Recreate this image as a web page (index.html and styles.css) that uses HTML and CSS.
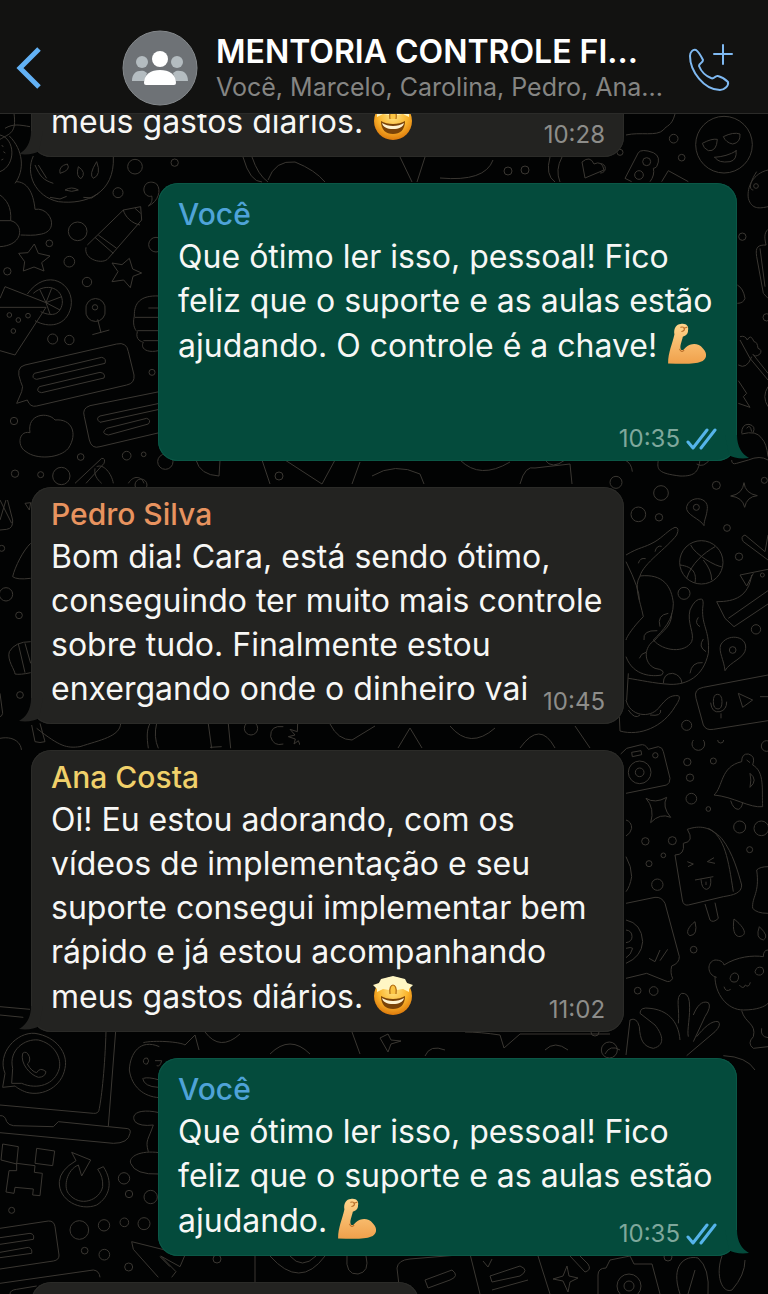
FILE: index.html
```
<!DOCTYPE html>
<html lang="pt-BR">
<head>
  <meta charset="UTF-8">
  <meta name="viewport" content="width=device-width, initial-scale=1.0">
  <title>Mentoria Controle Financeiro</title>
  <link rel="stylesheet" href="styles.css">
</head>
<body>
  <!-- Ícones reutilizados -->
  <svg class="sprite" aria-hidden="true">
    <defs>
      <linearGradient id="skin" x1="0" y1="0" x2="0" y2="1">
        <stop offset="0" stop-color="#ffd58c"/>
        <stop offset="1" stop-color="#f0a04b"/>
      </linearGradient>
      <radialGradient id="face" cx="50%" cy="35%" r="65%">
        <stop offset="0" stop-color="#ffe486"/>
        <stop offset=".6" stop-color="#fbb52c"/>
        <stop offset="1" stop-color="#dd7a0c"/>
      </radialGradient>
    </defs>
    <symbol id="arm" viewBox="0 0 40 40">
      <path d="M2 38.500 C2 28 6 20 8 11 C7 5 10 1 14 1 C19 0 22 3 21 7 C21 11 19 12 16 13 C15 18 13 21 14 25 C16 27 17 25 19 23 C24 19 31 19 35 24 C40 29 39 35 33 37 C28 39.500 14 39 2 38.500Z" fill="url(#skin)"/>
      <path d="M14 4 C18 3 19 7 15 8 M20 4 L17 5 M13 25 C14 27 15 28 17 26" fill="none" stroke="#b96f2a" stroke-width="1" stroke-linecap="round"/>
    </symbol>
    <symbol id="star-face" viewBox="0 0 42 42">
      <circle cx="21" cy="22" r="19" fill="url(#face)"/>
      <path d="M9 5 L21 2 L33 5 L35 9 L41 11 L37 15 L37 18 L31 15 L25 16 L21 11 L17 16 L11 15 L5 18 L5 15 L1 11 L7 9Z" fill="#fff6c4"/>
      <path d="M18 20 C17 14 19 11 21 11 C23 11 25 14 24 20" fill="#fbc443" stroke="#b06b13" stroke-width="1.200"/>
      <path d="M9 22 C15 26 27 26 33 22 C33 31 28 35 21 35 C14 35 9 31 9 22Z" fill="#7a4308"/>
      <path d="M10 24 C16 28 26 28 32 24 C31 28 27 30 21 30 C15 30 11 28 10 24Z" fill="#fff3cf"/>
    </symbol>
    <symbol id="checks" viewBox="0 0 32 22">
      <path d="M2 14 L7 20 L21 2 M15 20 L29 2" fill="none" stroke="#55b4ea" stroke-width="3" stroke-linecap="round" stroke-linejoin="round"/>
    </symbol>
  </svg>

  <div class="chat">
    <!-- Papel de parede -->
    <svg class="wallpaper" viewBox="0 0 768 1294" preserveAspectRatio="xMidYMin slice" aria-hidden="true">
      <!-- esquerda, topo -->
      <svg x="0" y="110" width="180" height="380" viewBox="0 0 540 1140">
        <path d="M0 88 C30 70 50 70 42 10 M15 55 C40 40 60 45 90 50 M0 75 C45 85 50 165 0 185 M28 78 C70 120 75 180 45 220 M5 105 l5 6 M10 125 l6 4 M4 150 l6 -3"/>
        <path d="M100 138 C75 190 105 260 175 275 C260 285 345 250 340 140 M105 165 C120 200 130 210 160 220 M115 165 L140 205 M180 190 q-5 -22 22 -28 q12 18 -22 28 M235 170 q-8 30 8 36 q18 -18 -8 -36 M290 155 q-25 40 -10 50 q25 -10 10 -50 M195 240 q20 -12 40 0 q-20 8 -40 0 M150 262 l30 5 l20 -8 M250 262 l25 2 l20 -14"/>
        <path d="M48 215 C80 215 100 245 105 298 C150 290 180 360 125 372 C100 378 80 375 62 375 M0 255 C20 270 35 290 32 332 C70 340 75 405 0 410 M0 332 h32"/>
        <path d="M262 405 L370 300 L422 290 L425 330 L325 445 C310 465 250 450 258 412 M285 382 L340 430 M295 375 L350 415 M370 300 C375 320 395 340 420 345 M405 295 L422 310"/>
        <path d="M103 402 l12 28 l35 8 l-25 20 l7 25 l-30 -12 l-32 12 l4 -28 l-18 -25 l28 -2z M388 445 l10 32 l27 12 l-26 10 l-8 34 l-20 -23 l-35 5 l18 -30 l-18 -26 l30 5z"/>
        <path d="M0 592 H138 L45 735 L0 722 M0 565 L15 530 L138 578 M82 552 C140 470 225 520 213 590 C200 650 145 655 105 632 M100 550 C140 515 190 535 187 580 C180 620 150 618 122 605 M138 578 L120 540 M138 578 L155 535 M138 578 L185 560 M138 578 L180 600 M138 578 L150 612"/>
        <path d="M258 600 a29 29 0 1 1 57 0 a29 29 0 1 1 -57 0 M293 628 L303 668 M277 674 L328 660"/>
        <path d="M478 558 C420 555 402 580 403 618 C395 650 410 665 412 665 C405 690 425 695 430 697 C420 715 440 730 475 722 M405 622 H478 M412 662 H478 M430 692 H478 M445 594 h33"/>
        <path d="M75 765 L350 702 Q380 695 385 725 L402 795 Q405 820 380 825 L110 888 Q90 893 82 870 L50 880 L65 845 Q72 830 62 815 Q45 772 75 765Z M103 790 L305 742 Q320 745 315 760 L110 808 Q92 805 103 790Z M118 830 L300 787 Q318 790 312 804 L125 848 Q105 845 118 830Z"/>
        <path d="M478 845 L270 887 Q245 895 253 920 L268 990 Q275 1018 300 1010 L478 968 M478 880 L300 918 Q285 925 300 937 L478 898 M320 955 L440 925 Q455 930 445 942 L325 975 Q300 970 320 955Z"/>
        <path d="M90 968 C55 960 50 1010 78 1025 C110 1050 180 1045 205 1015 C235 970 215 925 165 930 C145 905 80 910 90 968Z"/>
        <path d="M225 1120 L305 1045 Q318 1045 312 1060 L258 1120 M290 1070 C310 1060 335 1090 340 1120 M285 1075 C280 1100 300 1115 305 1120 M385 1120 C400 1095 425 1098 432 1120"/>
        <path d="M440 220 C420 240 440 265 455 258 C458 270 455 280 445 288 C475 275 485 240 470 222 C460 215 450 215 440 220Z"/>
        <circle cx="405" cy="170" r="22"/><circle cx="524" cy="158" r="11"/><circle cx="354" cy="248" r="15"/><circle cx="233" cy="364" r="28"/><circle cx="148" cy="400" r="10"/><circle cx="208" cy="455" r="16"/><circle cx="22" cy="484" r="11"/><circle cx="261" cy="516" r="14"/><circle cx="285" cy="592" r="8"/><circle cx="28" cy="615" r="7"/><circle cx="55" cy="630" r="7"/><circle cx="84" cy="617" r="7"/><circle cx="40" cy="663" r="7"/><circle cx="158" cy="687" r="15"/><circle cx="208" cy="690" r="14"/><circle cx="456" cy="787" r="9"/><circle cx="42" cy="933" r="11"/><circle cx="242" cy="1041" r="10"/><circle cx="380" cy="1037" r="13"/><circle cx="431" cy="1033" r="7"/><circle cx="45" cy="1091" r="11"/><circle cx="122" cy="1094" r="9"/><circle cx="184" cy="1098" r="26"/><circle cx="496" cy="1055" r="23"/><circle cx="468" cy="404" r="22"/>
      </svg>
      <!-- direita, topo -->
      <svg x="600" y="110" width="168" height="370" viewBox="0 0 504 1110">
        <circle cx="372" cy="104" r="85"/>
        <path d="M307 100 Q335 85 352 88 Q350 125 325 122 Q310 115 307 100Z M370 80 Q400 65 420 72 Q422 98 398 102 Q378 98 370 80Z M342 142 Q380 140 410 122 M345 142 Q355 160 390 155 Q412 150 408 120"/>
        <path d="M78 75 C120 65 170 80 190 60 C200 45 215 50 225 12 M75 205 L115 128 Q125 115 160 128 Q185 140 170 170 Q165 175 160 175 Q165 195 150 215 M75 205 L95 215 M185 215 L205 182 L265 215"/>
        <path d="M504 180 C460 190 440 230 445 265 C455 300 480 295 504 290 M470 185 C450 215 445 240 460 240 M504 358 C490 370 495 390 498 405 C475 405 465 410 470 440 L490 550 L504 565 M480 415 L495 530 M412 525 Q430 535 435 565 Q430 580 412 580"/>
        <path d="M420 680 q15 -5 22 10 q10 -20 20 5 q10 0 12 20 q15 5 5 18 q-15 10 -20 0 L504 790 M420 690 L450 745 L504 810 M415 765 Q440 780 455 740 M415 812 L440 850 L430 860 L450 892 L415 880 M504 830 Q485 860 504 890"/>
        <path d="M425 970 q0 -28 22 -27 q22 5 12 25 M440 955 q10 -15 15 10 M425 972 Q470 960 485 985 Q500 1000 504 1040 M395 1050 Q395 1065 410 1060 L445 1050 Q480 1035 504 1050 M75 1050 Q95 1060 97 1085 M175 1050 C170 1080 175 1090 240 1098 C290 1100 295 1080 300 1050 M290 1062 Q310 1075 330 1048"/>
        <circle cx="221" cy="86" r="13"/><circle cx="245" cy="143" r="10"/><circle cx="60" cy="127" r="9"/><circle cx="140" cy="155" r="12"/><circle cx="117" cy="195" r="13"/><circle cx="2" cy="175" r="14"/><circle cx="427" cy="380" r="11"/><circle cx="468" cy="228" r="7"/><circle cx="500" cy="622" r="11"/>
      </svg>
      <!-- direita, meio -->
      <svg x="600" y="400" width="168" height="340" viewBox="0 0 504 1020">
        <path d="M432 248 Q435 280 472 287 Q440 290 434 322 Q428 292 392 288 Q428 282 432 248Z M312 377 C300 355 255 345 260 320 C270 285 325 290 322 325 C320 350 312 360 312 377Z M375 812 C372 780 355 755 362 735 C380 700 440 705 437 745 C435 775 390 785 375 812Z"/>
        <circle cx="304" cy="487" r="65"/>
        <path d="M272 435 C285 465 350 500 365 500 M345 440 C310 460 275 490 260 535 M240 495 C280 500 290 520 285 548 M310 480 Q335 510 335 540"/>
        <path d="M78 465 C120 440 130 445 165 425 C190 410 205 390 225 382 Q240 382 230 405 C200 445 130 490 120 528 C190 520 215 560 220 610 C220 660 190 690 160 720 C190 755 255 760 275 725 C285 700 260 670 270 630 Q285 595 305 597 Q312 600 308 625 C305 680 330 690 325 760 C310 830 260 855 210 853 C160 850 120 840 85 835 M120 528 C100 560 120 600 130 650 C100 680 80 710 78 720 M78 485 Q120 570 118 600 M78 770 C100 830 160 830 185 825 Q200 810 165 805 C130 790 130 740 165 720 C190 690 215 680 215 640"/>
        <path d="M180 680 q-10 -35 25 -40 M132 720 q-5 -30 40 -28 M118 775 q5 -15 20 -18 M190 850 q0 -30 28 -30 q25 5 28 30 M270 820 q5 -35 38 -32 M300 680 q-18 -10 -5 -28 M318 755 q-25 -15 -8 -38 M115 490 q5 -18 22 -14 M165 455 q5 -20 20 -16"/>
        <path d="M78 900 C90 950 150 955 175 925 C200 895 210 885 235 887 Q245 892 225 920 C190 980 120 1010 60 993 L58 950 M85 820 L80 900 M85 930 q20 30 35 15 M150 945 q35 5 32 -15"/>
        <path d="M504 405 L495 455 L435 405 Q420 410 430 425 L504 480 M504 508 L420 525 L440 558 L460 520 M455 525 C445 590 405 605 350 605 L375 655 L402 680 L504 612 M385 655 L504 572"/>
        <path d="M504 825 L310 862 Q280 867 288 895 L310 975 Q318 992 340 988 L504 962 M340 905 q0 -22 12 -22 q14 0 14 22 q0 22 -12 22 q-14 0 -14 -22 M332 908 Q335 940 360 935 Q380 930 380 905 M363 940 v15 M415 880 L458 900 L428 922Z M480 890 h24"/>
        <circle cx="48" cy="247" r="18"/><circle cx="183" cy="279" r="22"/><circle cx="115" cy="343" r="22"/><circle cx="177" cy="352" r="11"/><circle cx="289" cy="322" r="9"/><circle cx="349" cy="256" r="12"/><circle cx="493" cy="241" r="9"/><circle cx="381" cy="384" r="10"/><circle cx="417" cy="470" r="11"/><circle cx="252" cy="580" r="18"/><circle cx="468" cy="688" r="14"/><circle cx="398" cy="750" r="10"/><circle cx="487" cy="525" r="6"/><circle cx="260" cy="976" r="15"/>
      </svg>
      <!-- direita, baixo -->
      <svg x="600" y="740" width="168" height="330" viewBox="0 120 504 990">
        <path d="M62 162 L80 145 L120 135 Q135 130 145 148 L175 140 Q188 142 190 155 L210 235 Q210 250 200 255 L78 280 M95 157 l28 -5 l2 12 l-28 6z"/>
        <circle cx="119" cy="217" r="34"/><circle cx="119" cy="217" r="13"/><circle cx="166" cy="166" r="8"/>
        <path d="M138 295 Q165 312 200 292 Q185 320 212 352 Q180 338 152 368 Q165 325 138 295Z"/>
        <path d="M425 185 Q425 160 445 162 Q468 168 458 195 C495 215 485 270 488 320 C450 325 400 290 342 285 C370 260 360 200 425 185Z M450 220 Q475 240 450 262 Q455 240 450 220Z M392 302 Q400 328 415 328 Q425 325 428 308 M440 180 l10 8"/>
        <path d="M262 388 C300 375 330 380 365 415 C400 460 415 520 425 555 C425 580 400 585 370 590 L265 615 Q250 618 247 600 L225 465 Q255 465 250 430 Q285 425 262 388Z M325 385 C375 410 385 480 400 575 M262 485 L280 492 L264 500 M342 473 L322 485 L345 490 M285 540 L340 530 M303 538 Q305 568 320 568 Q335 565 332 535 M318 545 v10 M315 612 L330 660 Q340 670 355 655 L345 608"/>
        <path d="M285 665 C265 680 255 700 270 707 Q295 705 285 665Z M402 657 C395 700 410 715 425 708 C445 700 425 675 402 657Z M478 680 Q465 715 490 720 Q510 710 478 680Z"/>
        <path d="M78 610 L165 592 Q185 590 195 610 L238 770 Q238 790 215 798 Q210 820 218 835 Q210 850 195 842 L140 820 L78 835 M78 660 Q125 670 128 725 Q125 770 78 790 M78 690 q18 2 18 20 q0 15 -18 18 M78 745 q15 -5 20 0 q-5 20 -20 28 M147 775 L165 785 L180 750 M180 782 L203 748 M78 360 Q95 365 95 385 Q92 400 78 408 M78 470 Q95 500 95 530 Q90 560 78 575"/>
        <path d="M350 832 C320 825 320 785 345 780 C360 780 370 785 372 795 C410 770 460 765 490 770 Q490 750 504 750 M345 830 C345 880 380 930 430 930 C470 930 495 920 504 910 M390 835 q5 -20 20 -15 q12 10 0 25 q-18 5 -20 -10 M465 815 q5 -18 22 -12 q10 15 -5 22 q-15 2 -17 -10 M418 855 q12 15 18 0 q10 10 15 -8 M372 860 q5 18 20 8 M425 932 C435 970 470 970 460 1010 Q440 1030 460 1045 L504 1040 M485 985 q-5 25 19 28 M470 510 Q480 500 504 500 M470 510 C480 580 455 590 458 625 Q470 640 504 640"/>
        <path d="M78 1065 L90 960 Q110 950 118 980 C120 1020 130 1040 160 1045 C200 1035 185 1000 165 975 L120 940 Q120 920 150 925 C200 930 235 960 240 1020 M235 970 C240 930 225 890 245 880 Q265 878 268 905 C272 950 260 990 265 1010 M280 945 C290 920 305 900 325 908 Q335 920 315 950 L280 1025 M290 1010 C310 985 335 960 355 965 Q365 975 345 995 L260 1067 M370 1067 Q440 1070 465 1110"/>
        <circle cx="295" cy="132" r="19"/><circle cx="362" cy="120" r="9"/><circle cx="262" cy="186" r="11"/><circle cx="340" cy="183" r="9"/><circle cx="270" cy="233" r="11"/><circle cx="274" cy="296" r="16"/><circle cx="325" cy="327" r="7"/><circle cx="419" cy="381" r="18"/><circle cx="484" cy="385" r="22"/><circle cx="449" cy="449" r="9"/><circle cx="136" cy="424" r="11"/><circle cx="217" cy="422" r="12"/><circle cx="190" cy="466" r="7"/><circle cx="147" cy="491" r="9"/><circle cx="172" cy="554" r="17"/><circle cx="281" cy="749" r="10"/><circle cx="113" cy="872" r="10"/><circle cx="161" cy="873" r="13"/><circle cx="28" cy="1050" r="24"/><circle cx="500" cy="138" r="16"/>
      </svg>
      <!-- esquerda, meio -->
      <svg x="0" y="500" width="300" height="250" viewBox="0 90 900 750">
        <path d="M0 58 Q15 65 20 80 L38 150 Q40 175 20 178 L0 180 M0 150 L18 90 M0 90 L35 160 M92 220 C70 240 45 290 38 320 Q50 330 92 325 M92 515 Q45 515 28 545 C20 570 45 600 45 612 Q60 615 92 608 M55 522 L75 608 M75 520 L92 580 M0 670 L8 730 Q5 740 0 740 M0 805 C50 795 75 830 60 860 M75 100 L92 98 L88 120Z"/>
        <path d="M95 765 L105 815 Q120 820 135 815 L120 760 M110 775 C180 830 200 835 240 830 C300 810 360 800 362 760 M445 835 C440 800 440 780 450 760 M470 760 Q460 800 475 835 M625 762 L635 835 M685 762 L692 835 M630 832 L665 830 M850 770 Q810 765 812 800 Q820 830 850 822"/>
        <path d="M893 760 L892 785 L870 778 L885 795 L865 800 L886 807 L882 822 L895 812 L900 825"/>
        <circle cx="18" cy="373" r="20"/><circle cx="57" cy="436" r="10"/><circle cx="5" cy="235" r="9"/><circle cx="60" cy="675" r="10"/><circle cx="753" cy="775" r="20"/>
      </svg>
      <!-- esquerda, baixo -->
      <svg x="0" y="1000" width="200" height="294" viewBox="0 0 600 882">
        <path d="M0 20 L90 28 M0 45 L70 52 M318 93 C315 200 305 290 298 325 Q297 342 280 340 L0 315 M347 93 L325 378 M0 347 Q15 345 20 365 Q25 375 40 377 L160 380 L175 365 L375 385 Q395 385 390 400 Q385 430 340 430 L0 398"/>
        <path d="M8 262 L15 220 C-10 160 50 95 105 100 C170 110 205 160 195 205 C185 260 130 290 80 277 C60 270 50 262 45 258Z M35 250 L38 205 C25 150 75 115 115 120 C160 130 185 170 178 205 C165 255 110 270 65 250Z M68 160 Q80 150 88 170 Q92 185 82 192 Q95 215 110 218 Q120 200 138 215 Q135 232 115 232 C90 225 60 190 68 160Z"/>
        <path d="M8 432 L55 440 L50 492 L3 480Z M110 445 L164 453 L158 497 L105 490Z M50 490 L105 497 L103 517 L127 520 L120 587 L98 585 L100 567 L45 562 L42 580 L18 576 L27 512 L50 512Z M215 457 L272 480 L245 528 L235 495 C200 510 190 560 205 580 C240 625 300 600 308 560 Q310 530 293 508 L310 500 C340 545 330 590 290 615 C240 635 175 600 178 545 Q180 510 228 482Z"/>
        <path d="M478 140 C420 115 390 160 388 210 C395 260 430 290 478 293 M430 128 C460 120 540 125 555 135 L585 105 L597 150 M430 235 Q445 230 478 240 M428 235 Q432 260 475 262 M430 182 q2 -10 12 -8 q8 8 0 18 q-12 2 -12 -10 M465 182 h20 q-5 20 -15 15 M478 338 C420 325 390 340 405 365 Q420 380 460 375 C445 420 435 420 445 455 M478 458 C420 450 385 470 392 490 Q405 525 478 522"/>
        <path d="M0 685 L145 663 Q162 662 165 680 L177 765 Q178 780 160 783 L0 807 M0 713 L90 700 Q105 702 100 718 L0 733 M0 757 L85 742 Q98 745 95 760 L0 773 M0 850 L280 810 Q298 812 300 832 M30 882 Q30 870 50 868 L110 858 M395 725 L555 765 L540 800 L482 768 L528 815 L515 832 M395 725 L400 748 L475 832 M480 770 L510 800"/>
        <circle cx="372" cy="535" r="17"/><circle cx="387" cy="582" r="11"/><circle cx="452" cy="591" r="20"/><circle cx="35" cy="631" r="9"/><circle cx="238" cy="690" r="28"/><circle cx="312" cy="676" r="17"/><circle cx="373" cy="667" r="13"/><circle cx="432" cy="671" r="18"/><circle cx="254" cy="752" r="10"/><circle cx="313" cy="764" r="16"/><circle cx="386" cy="801" r="12"/>
      </svg>
      <!-- faixas entre as mensagens -->
      <path d="M243 157 Q250 182 262 182 M252 157 Q258 175 268 182 M268 180 Q275 160 295 162 Q315 170 325 182 M400 157 L412 182 M425 157 L417 182 M440 178 Q485 182 493 160 M550 157 Q545 175 555 182 M562 157 Q555 170 560 182 M582 162 Q590 155 594 164 Q602 160 604 170 L585 178Z"/>
      <path d="M196 460 Q200 475 219 476 L220 460 M262 460 L270 484 M285 460 L322 484 L335 460 M360 462 L352 484 M372 476 Q395 462 420 474 L424 484 M460 460 Q480 480 510 462 M520 484 Q525 465 535 468 L570 464 L572 484 M545 460 Q552 470 565 460"/>
      <path d="M330 724 Q338 740 352 740 L375 726 M398 748 L410 728 L422 748 M450 726 Q470 750 495 728 M520 748 Q540 720 555 748 M575 726 L590 748"/>
      <path d="M352 1032 L360 1054 M380 1038 L388 1034 L391 1040 L401 1041 L391 1044 L388 1052Z M425 1056 Q430 1044 445 1050 M465 1032 Q480 1032 500 1035 L504 1048 L520 1034 L610 1034 M545 1050 Q555 1040 568 1050 M605 1054 Q610 1044 620 1050 M205 1032 Q220 1052 240 1034 M270 1054 Q290 1034 310 1054"/>
      <path d="M255 1256 V1294 M270 1256 Q300 1290 325 1256 M290 1256 Q302 1270 316 1256 M347 1256 Q345 1275 358 1274 Q370 1272 366 1256 M400 1294 L397 1268 Q398 1260 410 1259 L470 1254 L480 1294 M425 1280 L452 1270 Q460 1276 450 1280 L428 1288Z M483 1261 L488 1267 L492 1259 M490 1276 L520 1266 Q530 1270 520 1276 L492 1282Z M492 1290 L528 1280 M538 1256 L550 1294 M567 1266 L569 1276 L578 1278 L570 1282 L568 1292 L563 1281 L553 1279 L563 1276Z M570 1256 L585 1272 Q592 1270 588 1264 L580 1256 M598 1294 V1275 Q598 1268 606 1268 L610 1260 L630 1256 L634 1264 L652 1264 L660 1294 M680 1294 C670 1265 685 1255 698 1258 Q710 1268 708 1294 M688 1294 L695 1270 M722 1256 C715 1275 722 1294 732 1290 Q745 1275 745 1260"/>
      <circle cx="629" cy="1286" r="12"/><circle cx="629" cy="1286" r="5"/><circle cx="217" cy="1259" r="4"/><circle cx="668" cy="1257" r="4"/><circle cx="141" cy="485" r="6"/><circle cx="279" cy="476" r="4"/><circle cx="508" cy="171" r="4"/><circle cx="525" cy="170" r="4"/><circle cx="595" cy="1032" r="4"/>
    </svg>

    <header class="chat-header">
      <button class="icon-btn back-btn" aria-label="Voltar">
        <svg width="30" height="46" viewBox="0 0 30 46"><path d="M25 4 L6 23 L25 42" fill="none" stroke="#62b1f5" stroke-width="5"/></svg>
      </button>
      <svg class="avatar" viewBox="0 0 76 76" role="img" aria-label="Foto do grupo">
        <circle cx="38" cy="38" r="37" fill="#6e7276" stroke="#85898c"/>
        <g fill="#b4bcc0">
          <circle cx="20" cy="32" r="6"/>
          <circle cx="55" cy="32" r="6"/>
          <path d="M10 51 C10 43 15 40 22 41 L25 43 L22 51Z M66 51 C66 43 61 40 54 41 L51 43 L54 51Z"/>
        </g>
        <circle cx="38" cy="29" r="8" fill="#fff"/>
        <path d="M22 53 C22 44 29 40 38 40 C47 40 54 44 54 53 Q54 55 52 55 H24 Q22 55 22 53Z" fill="#fff"/>
      </svg>
      <div class="group-info">
        <h1 class="group-name">MENTORIA CONTROLE FI...</h1>
        <p class="group-members">Você, Marcelo, Carolina, Pedro, Ana...</p>
      </div>
      <button class="icon-btn call-btn" aria-label="Ligar">
        <svg width="48" height="50" viewBox="0 0 48 50" fill="none" stroke="#7fb9f2" stroke-width="2" stroke-linejoin="round" stroke-linecap="round">
          <path d="M4 13 C4 9 7 6 10 7 C13 9 15 13 17 17 C17 20 13 20 13 23 C15 28 20 33 25 35 C28 37 29 32 32 33 C36 34 39 36 42 39 C43 43 38 47 34 47 C18 47 4 28 4 13Z"/>
          <path d="M37 2 V21 M28 11 H46"/>
        </svg>
      </button>
    </header>

    <main class="messages">
      <article class="bubble incoming scrolled">
        <p class="text">meus gastos diários. <svg class="emoji" role="img" aria-label="🤩"><use href="#star-face"/></svg></p>
        <span class="meta"><time>10:28</time></span>
      </article>

      <article class="bubble outgoing spaced">
        <h2 class="author me">Você</h2>
        <p class="text">Que ótimo ler isso, pessoal! Fico feliz que o suporte e as aulas estão ajudando. O controle é a chave! <svg class="emoji" role="img" aria-label="💪"><use href="#arm"/></svg></p>
        <span class="meta"><time>10:35</time><svg class="checks" role="img" aria-label="Lida"><use href="#checks"/></svg></span>
      </article>

      <article class="bubble incoming">
        <h2 class="author pedro">Pedro Silva</h2>
        <p class="text">Bom dia! Cara, está sendo ótimo, conseguindo ter muito mais controle sobre tudo. Finalmente estou enxergando onde o dinheiro vai</p>
        <span class="meta"><time>10:45</time></span>
      </article>

      <article class="bubble incoming">
        <h2 class="author ana">Ana Costa</h2>
        <p class="text">Oi! Eu estou adorando, com os vídeos de implementação e seu suporte consegui implementar bem rápido e já estou acompanhando meus gastos diários. <svg class="emoji" role="img" aria-label="🤩"><use href="#star-face"/></svg></p>
        <span class="meta"><time>11:02</time></span>
      </article>

      <article class="bubble outgoing">
        <h2 class="author me">Você</h2>
        <p class="text">Que ótimo ler isso, pessoal! Fico feliz que o suporte e as aulas estão ajudando. <svg class="emoji" role="img" aria-label="💪"><use href="#arm"/></svg></p>
        <span class="meta"><time>10:35</time><svg class="checks" role="img" aria-label="Lida"><use href="#checks"/></svg></span>
      </article>

      <article class="bubble incoming next"></article>
    </main>
  </div>
</body>
</html>
```
FILE: styles.css
```
* {
  box-sizing: border-box;
}
body {
  margin: 0;
  background: #020303;
  color: #f7f7f5;
  font-family: Inter, 'Liberation Sans', sans-serif;
}
h1, h2, p {
  margin: 0;
}
.sprite {
  position: absolute;
  width: 0;
  height: 0;
}
.chat {
  position: relative;
  display: flex;
  flex-direction: column;
  height: 100vh;
  overflow: hidden;
}
.wallpaper {
  position: absolute;
  inset: 0;
  width: 100%;
  height: 100%;
  fill: none;
  stroke: #3a3732;
  stroke-width: 1;
}
.wallpaper svg {
  stroke-width: 3;
}

/* Cabeçalho */
.chat-header {
  position: relative;
  z-index: 1;
  display: flex;
  align-items: center;
  flex-shrink: 0;
  height: 114px;
  padding: 22px 34px 0 14px;
  background: #121211;
  border-bottom: 1px solid #2b2b29;
}
.icon-btn {
  display: flex;
  padding: 0;
  background: none;
  border: none;
  cursor: pointer;
}
.back-btn {
  margin-right: 78px;
}
.avatar {
  flex-shrink: 0;
  width: 76px;
  height: 76px;
  margin-right: 18px;
}
.group-info {
  flex: 1;
  min-width: 0;
  padding-top: 2px;
  white-space: nowrap;
}
.group-name {
  font-size: 32px;
  font-weight: 600;
  line-height: 36px;
  color: #fff;
}
.group-members {
  font-size: 25px;
  line-height: 34px;
  color: #858583;
}

/* Mensagens */
.messages {
  position: relative;
  flex: 1;
  display: flex;
  flex-direction: column;
  gap: 26px;
  min-height: 0;
  padding: 0 31px;
  overflow: hidden;
}
.bubble {
  position: relative;
  flex-shrink: 0;
  padding: 6px 10px 13px 20px;
  border-radius: 20px;
}
.incoming {
  align-self: flex-start;
  width: 84%;
  background: #232321;
  box-shadow: inset 0 0 0 1px #2b2b28;
}
.outgoing {
  align-self: flex-end;
  width: 82%;
  padding-top: 10px;
  background: #044b3c;
  box-shadow: inset 0 0 0 1px #0b5746;
}
.bubble::after {
  content: '';
  position: absolute;
  bottom: 2px;
  width: 24px;
  height: 24px;
}
.incoming::after {
  left: -12px;
  background: #232321;
  clip-path: path('M12 0 C12 12 7 19 0 23 C8 24 16 23 20 20 L24 0 Z');
}
.outgoing::after {
  right: -12px;
  background: #044b3c;
  clip-path: path('M12 0 C12 12 17 19 24 23 C16 24 8 23 4 20 L0 0 Z');
}
.scrolled {
  margin-top: -21px;
}
.spaced {
  padding-bottom: 93px;
}
.next {
  width: 55%;
  height: 80px;
}
.author {
  font-size: 30px;
  font-weight: 500;
  line-height: 42px;
}
.me { color: #4fa3d8; }
.pedro { color: #e8935f; }
.ana { color: #f0d06a; }
.text {
  font-size: 32px;
  line-height: 44px;
}
.emoji {
  width: 42px;
  height: 42px;
  vertical-align: -8px;
}
.meta {
  position: absolute;
  right: 19px;
  bottom: 8px;
  display: flex;
  align-items: center;
  gap: 6px;
  font-size: 24px;
  line-height: 28px;
  color: #8d8d8a;
}
.outgoing .meta {
  color: #7fa89c;
}
.checks {
  width: 32px;
  height: 22px;
}
```
